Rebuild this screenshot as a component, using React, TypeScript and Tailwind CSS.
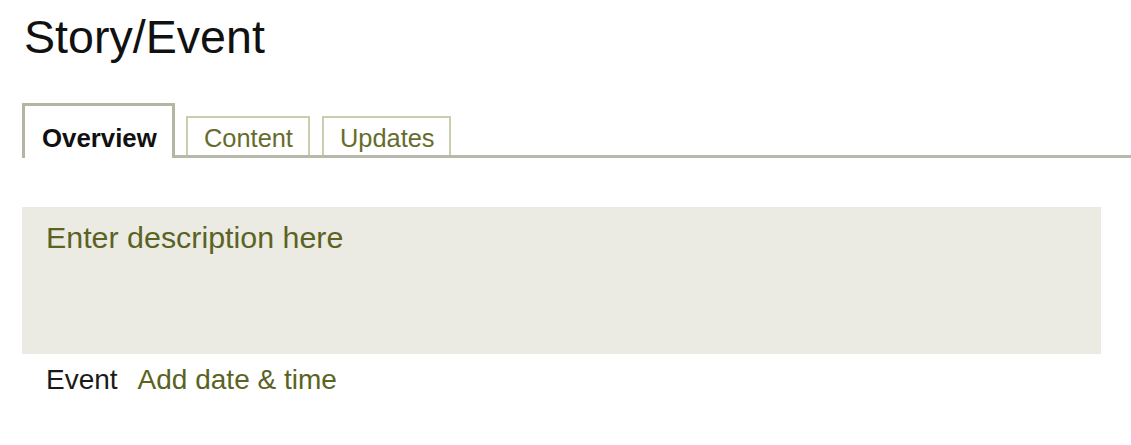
export default function App() {
  return (
    <main className="min-h-screen bg-white font-['Liberation_Sans',Arial,sans-serif] pt-[10px]">
      {/* Titre */}
      <h1 className="pl-[24px] text-[46.6px] leading-[54px] text-[#111111]">Story/Event</h1>

      {/* Onglets */}
      <div className="ml-[22px] mt-[39px] flex items-end gap-[11px] border-b-[3px] border-[#b7baab]">
        <div className="relative -mb-[3px] h-[55px] w-[153px] border-[3px] border-b-0 border-[#b3b6a2] bg-white pl-[17px] pt-[17px] text-[25.8px] leading-[30px] font-bold text-[#111111]">
          Overview
        </div>
        <div className="h-[39px] w-[124px] border-2 border-b-0 border-[#c9cfad] pl-[16px] pt-[5px] text-[25.4px] leading-[30px] text-[#666d2c]">
          Content
        </div>
        <div className="ml-[1px] h-[39px] w-[129px] border-2 border-b-0 border-[#c9cfad] pl-[16px] pt-[5px] text-[25.4px] leading-[30px] text-[#666d2c]">
          Updates
        </div>
      </div>

      {/* Description */}
      <div className="ml-[22px] mt-[49px] h-[147px] w-[1079px] bg-[#ebebe4] pl-[24px] pt-[13px]">
        <p className="text-[30.4px] leading-[34px] text-[#5b6323]">Enter description here</p>
      </div>

      {/* Événement */}
      <div className="ml-[46px] mt-[10px] flex gap-[20px] text-[28px] leading-[32px]">
        <span className="text-[#1a1a1a]">Event</span>
        <span className="text-[#5b6323]">Add date &amp; time</span>
      </div>
    </main>
  )
}
